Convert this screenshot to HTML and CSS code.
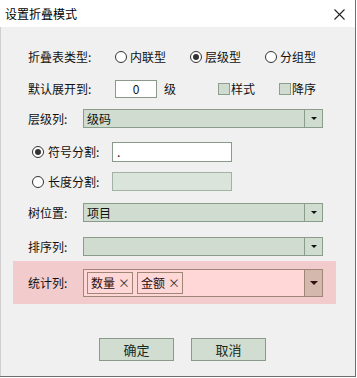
FILE: index.html
```html
<!DOCTYPE html>
<html>
<head>
<meta charset="utf-8">
<link rel="stylesheet" href="styles.css">
</head>
<body>
<div class="window">
  <div class="titlebar">
    <span class="title">设置折叠模式</span>
    <svg class="close" width="11" height="11" viewBox="0 0 11 11"><path d="M0.5 0.5 L10.5 10.5 M10.5 0.5 L0.5 10.5" stroke="#222" stroke-width="1.1" fill="none"/></svg>
  </div>
  <div class="body">
    <div class="row r1">
      <span class="label wide">折叠表类型:</span>
      <label class="opt"><span class="radio"></span>内联型</label>
      <label class="opt"><span class="radio on"></span>层级型</label>
      <label class="opt"><span class="radio"></span>分组型</label>
    </div>
    <div class="row r2">
      <span class="label wide">默认展开到:</span>
      <span class="num">0</span>
      <span class="unit">级</span>
      <label class="chk"><span class="box"></span>样式</label>
      <label class="chk second"><span class="box"></span>降序</label>
    </div>
    <div class="row r3">
      <span class="label">层级列:</span>
      <div class="combo"><span class="combo-text">级码</span><span class="combo-btn"><i class="arrow"></i></span></div>
    </div>
    <div class="row r4">
      <label class="split"><span class="radio on"></span>符号分割:</label>
      <span class="field">.</span>
    </div>
    <div class="row r5">
      <label class="split"><span class="radio"></span>长度分割:</label>
      <span class="field disabled"></span>
    </div>
    <div class="row r6">
      <span class="label">树位置:</span>
      <div class="combo"><span class="combo-text">项目</span><span class="combo-btn"><i class="arrow"></i></span></div>
    </div>
    <div class="row r7">
      <span class="label">排序列:</span>
      <div class="combo"><span class="combo-text"></span><span class="combo-btn"><i class="arrow"></i></span></div>
    </div>
    <div class="pink">
      <span class="label">统计列:</span>
      <div class="combo multi">
        <span class="tags">
          <span class="tag">数量 <span class="x">×</span></span>
          <span class="tag">金额 <span class="x">×</span></span>
        </span>
        <span class="combo-btn"><i class="arrow"></i></span>
      </div>
    </div>
    <div class="buttons">
      <button class="btn">确定</button>
      <button class="btn">取消</button>
    </div>
  </div>
</div>
</body>
</html>
```
FILE: styles.css
```css
* { box-sizing: border-box; }
html, body { margin: 0; padding: 0; background: #ffffff; }
body {
  font-family: "Noto Sans CJK SC", "Microsoft YaHei", sans-serif;
  font-size: 12px;
  color: #111;
}
.window {
  width: 356px;
  height: 377px;
  border-right: 1px solid #6e6e6e;
  border-bottom: 1px solid #6e6e6e;
  background: #f0f0f0;
  display: flex;
  flex-direction: column;
}
.titlebar {
  height: 27px;
  background: #ffffff;
  display: flex;
  align-items: center;
  justify-content: space-between;
  padding: 0 10px 0 5px;
}
.title { font-size: 12px; color: #000; line-height: 1; }
.close { display: block; margin-top: 1px; }
.body {
  flex: 1;
  border-left: 1px solid #cfcfcf;
  padding-left: 27px;
}
.row { display: flex; align-items: center; line-height: 1; }
.r1 { height: 20px; margin-top: 20px; }
.r2 { height: 20px; margin-top: 12px; }
.r3 { height: 19px; margin-top: 10px; }
.r4 { height: 20px; margin-top: 14px; }
.r5 { height: 19px; margin-top: 10px; }
.r6 { height: 19px; margin-top: 12px; }
.r7 { height: 19px; margin-top: 15px; }

.label { width: 55px; flex: none; }
.label.wide { width: 87px; }

.opt { width: 75px; display: flex; align-items: center; gap: 3px; }
.radio {
  width: 12px; height: 12px; border-radius: 50%;
  border: 1px solid #333; background: #fff; position: relative; flex: none;
}
.radio.on::after {
  content: ""; position: absolute; left: 2px; top: 2px;
  width: 6px; height: 6px; border-radius: 50%; background: #333;
}

.num {
  width: 42px; height: 18px; background: #fff;
  border: 1px solid #8a9a8a;
  display: flex; align-items: center; justify-content: center;
}
.unit { margin-left: 7px; width: 54px; }
.chk { display: flex; align-items: center; gap: 1px; }
.chk.second { margin-left: 24px; }
.box {
  width: 12px; height: 12px; background: #cfdccf;
  border: 1px solid #8e9e8e; flex: none;
}

.combo {
  width: 240px; height: 100%;
  background: #cfdccf; border: 1px solid #8a9c8a;
  display: flex; align-items: center;
}
.combo-text { flex: 1; padding-left: 3px; }
.combo-btn {
  width: 18px; height: 100%; border-left: 1px solid #8a9c8a;
  display: flex; align-items: center; justify-content: center; flex: none;
}
.arrow {
  width: 0; height: 0;
  border-left: 3px solid transparent; border-right: 3px solid transparent;
  border-top: 3px solid #111;
}

.split { width: 84px; display: flex; align-items: center; gap: 4px; padding-left: 4px; }
.field {
  width: 120px; height: 100%; background: #fff;
  border: 1px solid #8a9a8a; padding-left: 4px;
  display: flex; align-items: center;
}
.field.disabled { background: #dbe4db; border-color: #a3b3a3; }

.pink {
  margin-top: 5px;
  margin-left: -15px;
  width: 323px; height: 43px;
  background: #f2cccc;
  display: flex; align-items: center;
  padding-left: 15px;
}
.combo.multi {
  height: 28px;
  background: #ffd7d7; border-color: #a08676;
}
.tags { flex: 1; display: flex; gap: 4px; padding-left: 3px; }
.tag {
  height: 22px; width: 46px;
  border: 1px solid #a08676;
  display: flex; align-items: center; padding-left: 3px;
  color: #2a1010;
}
.tag .x { margin-left: 3px; color: #333; }
.combo.multi .combo-btn { background: #d4b8ae; border-left-color: #a08676; }
.combo.multi .arrow { border-left-width: 4px; border-right-width: 4px; border-top: 4px solid #301010; }

.buttons {
  margin-top: 34px;
  display: flex; gap: 17px;
  padding-left: 71px;
}
.btn {
  width: 75px; height: 23px;
  background: #d0ddd0; border: 1px solid #8a9a8a;
  font-family: inherit; font-size: 13px; color: #1a2a1a;
  padding: 0; border-radius: 0;
}
```
